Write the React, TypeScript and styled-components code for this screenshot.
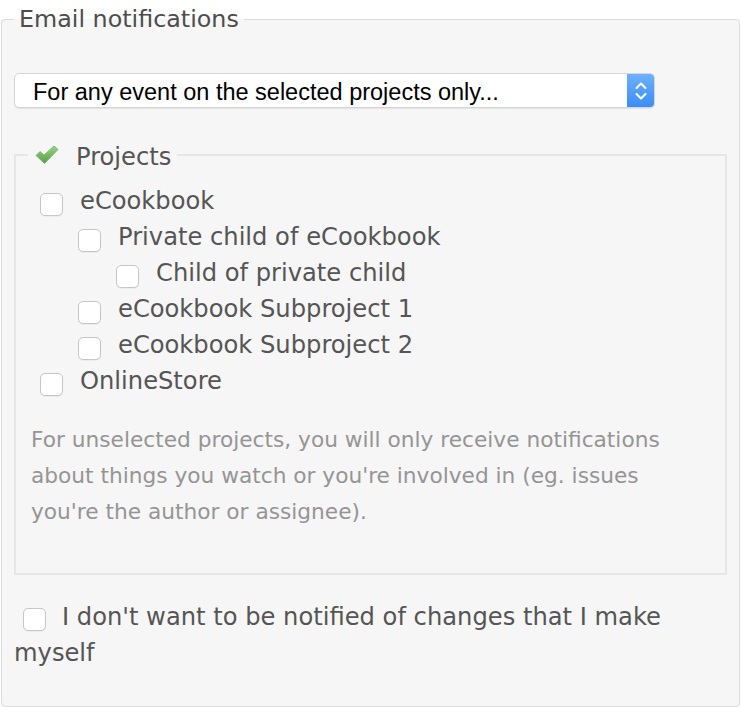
import * as React from 'react'
import styled, { createGlobalStyle } from 'styled-components'

const GlobalStyle = createGlobalStyle`
    html, body {
        margin: 0;
        padding: 0;
        background: #fff;
    }
    body {
        font-family: 'DejaVu Sans', Verdana, sans-serif;
        font-size: 24.2px;
        color: #555;
    }
`

interface Project {
    name: string
    children?: Project[]
}

const projects: Project[] = [
    {
        name: 'eCookbook',
        children: [
            { name: 'Private child of eCookbook', children: [{ name: 'Child of private child' }] },
            { name: 'eCookbook Subproject 1' },
            { name: 'eCookbook Subproject 2' },
        ],
    },
    { name: 'OnlineStore' },
]

const ProjectTree = ({ items, nested }: { items: Project[]; nested?: boolean }) => (
    <TreeList nested={nested}>
        {items.map((p) => (
            <li key={p.name}>
                <Row>
                    <Checkbox type="checkbox" />
                    <span>{p.name}</span>
                </Row>
                {p.children && <ProjectTree items={p.children} nested />}
            </li>
        ))}
    </TreeList>
)

const CheckIcon = () => (
    <svg width="24" height="20" viewBox="0 0 24 20">
        <defs>
            <linearGradient id="chk" x1="0" y1="0" x2="0" y2="1">
                <stop offset="0" stopColor="#94d482" />
                <stop offset="1" stopColor="#5a9f48" />
            </linearGradient>
        </defs>
        <path
            d="M1 10.5 L5 6.5 L9 10 L19 1 L23 4.5 L9.5 18.5 Z"
            fill="url(#chk)"
            stroke="#72b35f"
            strokeWidth="0.8"
            strokeLinejoin="round"
        />
    </svg>
)

const SelectArrows = () => (
    <svg width="14" height="22" viewBox="0 0 14 22">
        <path d="M2.5 8 L7 3.5 L11.5 8" fill="none" stroke="#fff" strokeWidth="2" strokeLinecap="round" strokeLinejoin="round" />
        <path d="M2.5 14 L7 18.5 L11.5 14" fill="none" stroke="#fff" strokeWidth="2" strokeLinecap="round" strokeLinejoin="round" />
    </svg>
)

export default function App() {
    return (
        <>
            <GlobalStyle />
            <Box>
                <Legend>Email notifications</Legend>
                <Select>
                    <SelectText>For any event on the selected projects only...</SelectText>
                    <SelectButton>
                        <SelectArrows />
                    </SelectButton>
                </Select>
                <Projects>
                    <ProjectsLegend>
                        <CheckIcon />
                        <span>Projects</span>
                    </ProjectsLegend>
                    <ProjectTree items={projects} />
                    <Hint>
                        For unselected projects, you will only receive notifications about things you watch or
                        you're involved in (eg. issues you're the author or assignee).
                    </Hint>
                </Projects>
                <NoSelf>
                    <Checkbox type="checkbox" />I don't want to be notified of changes that I make myself
                </NoSelf>
            </Box>
        </>
    )
}

const Box = styled.fieldset`
    margin: 5px 1px 0 1px;
    padding: 0 12px 34px 12px;
    min-width: 0;
    border: 1px solid #dcdcdc;
    border-radius: 4px;
    background-color: #f6f6f6;
    box-sizing: border-box;
    height: 702px;
`

const Legend = styled.legend`
    padding: 0 5px;
    font-size: 23.8px;
    line-height: 28px;
    color: #4d4d4d;
`

const Select = styled.div`
    display: flex;
    align-items: stretch;
    width: 641px;
    height: 35px;
    margin-top: 40px;
    box-sizing: border-box;
    background: #fff;
    border: 1px solid #d6d6d6;
    border-radius: 5px;
    box-shadow: 0 1px 1px rgba(0, 0, 0, 0.08);
    overflow: hidden;
`

const SelectText = styled.div`
    flex: 1;
    padding: 2px 0 0 18px;
    font-family: 'Liberation Sans', Arial, sans-serif;
    font-size: 23.5px;
    line-height: 33px;
    color: #000;
    white-space: nowrap;
`

const SelectButton = styled.div`
    width: 27px;
    display: flex;
    align-items: center;
    justify-content: center;
    background: linear-gradient(#6db2fb, #3a8cf6);
`

const Projects = styled.fieldset`
    margin: 33px 0 0 0;
    padding: 0 12px 43px 12px;
    min-width: 0;
    border: 2px solid #e6e6e6;
`

const ProjectsLegend = styled.legend`
    display: flex;
    align-items: center;
    gap: 17px;
    height: 28px;
    padding: 0 6px 0 7px;
    line-height: 24px;
    color: #555;

    span {
        padding-top: 4px;
    }
`

const TreeList = styled.ul<{ nested?: boolean }>`
    list-style: none;
    margin: ${({ nested }) => (nested ? '0' : '14px 0 0 0')};
    padding: 0 0 0 ${({ nested }) => (nested ? '38px' : '12px')};
`

const Row = styled.label`
    display: flex;
    align-items: flex-start;
    height: 36px;
    line-height: 36px;
    white-space: nowrap;
`

const Checkbox = styled.input`
    appearance: none;
    flex: none;
    width: 23px;
    height: 23px;
    margin: 10px 17px 0 0;
    box-sizing: border-box;
    background: #fff;
    border: 1px solid #c6c6c6;
    border-radius: 5px;
    box-shadow: 0 1px 0 rgba(0, 0, 0, 0.04);
`

const Hint = styled.p`
    margin: 23px 0 0 3px;
    font-size: 21.7px;
    line-height: 36px;
    color: #959595;
`

const NoSelf = styled.p`
    margin: 24px 0 0 0;
    line-height: 36px;

    ${Checkbox} {
        vertical-align: top;
        margin: 9px 16px 0 9px;
    }
`
